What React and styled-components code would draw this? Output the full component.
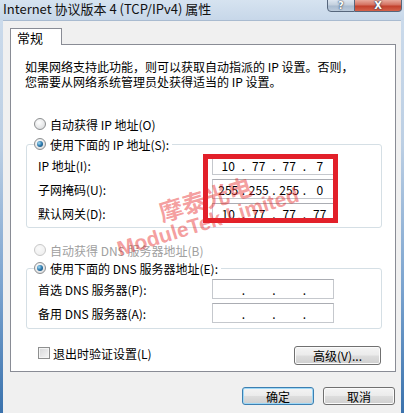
import React from 'react';
import styled, { createGlobalStyle } from 'styled-components';

const Global = createGlobalStyle`
  html, body { margin: 0; padding: 0; }
  body {
    font-family: "Noto Sans CJK SC", "Noto Sans", sans-serif;
    font-size: 12px;
    color: #000;
  }
  * { box-sizing: border-box; }
`;

const Window = styled.div`
  position: relative;
  width: 404px;
  height: 413px;
  display: flex;
  flex-direction: column;
  overflow: hidden;
  background: linear-gradient(180deg, #cddcec 0%, #bccfe4 35%, #7aa3cf 70%, #3a72ad 100%);
`;

const TitleBar = styled.div`
  height: 20px;
  flex: none;
  display: flex;
  justify-content: space-between;
  align-items: flex-start;
  background: linear-gradient(180deg, #d6e3f0, #c7d7e9);
`;

const Title = styled.div`
  padding-left: 3px;
  line-height: 17px;
  font-size: 13px;
  color: #111;
  white-space: nowrap;
`;

const Captions = styled.div`
  display: flex;
  margin-right: 2px;
  margin-top: -1px;
`;

const CaptionButton = styled.div`
  width: ${p => p.$w}px;
  height: 13px;
  display: flex;
  align-items: center;
  justify-content: center;
  border: 1px solid #56667c;
  border-left: ${p => (p.$close ? 'none' : '1px solid #56667c')};
  border-radius: ${p => (p.$close ? '0 0 4px 0' : '0 0 0 4px')};
  background: ${p =>
    p.$close
      ? 'linear-gradient(180deg, #e8a99c 0%, #d4705f 45%, #c2402c 55%, #d5624a 100%)'
      : 'linear-gradient(180deg, #dde6f0 0%, #c3d0de 45%, #a9bbcf 55%, #bccbdc 100%)'};
  color: #fff;
  font-family: "DejaVu Sans", sans-serif;
  font-weight: bold;
  font-size: 10px;
  line-height: 1;
  text-shadow: 0 0 2px #2a3a50, 0 0 1px #2a3a50;
`;

const Client = styled.div`
  flex: 1;
  margin: 0 3px;
  background: #f0f0f0;
  border-top: 1px solid #a9bbd0;
  padding: 7px 5px 0 7px;
  display: flex;
  flex-direction: column;
`;

const TabStrip = styled.div`
  display: flex;
  height: 16px;
`;

const Tab = styled.div`
  position: relative;
  z-index: 1;
  width: 52px;
  height: 17px;
  background: #fff;
  border: 1px solid #898c95;
  border-bottom: none;
  padding-left: 6px;
  font-size: 13px;
  line-height: 17px;
`;

const Panel = styled.div`
  background: #fff;
  border: 1px solid #898c95;
  padding: 14px 0 6px 0;
  display: flex;
  flex-direction: column;
`;

const Intro = styled.p`
  margin: 0 0 0 14px;
  line-height: 15px;
  font-size: 12px;
`;

const RadioRow = styled.div`
  display: flex;
  align-items: center;
  gap: 4px;
  height: 18px;
  margin-left: ${p => p.$ml ?? 23}px;
  margin-top: ${p => p.$mt ?? 0}px;
  color: ${p => (p.$disabled ? '#a0a0a0' : '#000')};
  white-space: nowrap;
`;

const RadioDot = styled.span`
  width: 12px;
  height: 12px;
  flex: none;
  border-radius: 50%;
  border: 1px solid ${p => (p.$disabled ? '#c8c8c8' : '#8c8e90')};
  background: ${p =>
    p.$disabled
      ? 'radial-gradient(circle at 40% 35%, #fafafa, #ececec)'
      : 'radial-gradient(circle at 40% 35%, #ffffff, #d4d6d8)'};
  display: flex;
  align-items: center;
  justify-content: center;
  &::after {
    content: '';
    display: ${p => (p.$checked ? 'block' : 'none')};
    width: 6px;
    height: 6px;
    border-radius: 50%;
    background: radial-gradient(circle at 35% 35%, #a6dcf5 0%, #2c79ad 50%, #123f63 100%);
  }
`;

const Group = styled.fieldset`
  margin: ${p => p.$mt ?? 0}px 13px 0 15px;
  padding: 0 0 ${p => p.$pb ?? 2}px 11px;
  border: 1px solid #d5dfe5;
  border-radius: 3px;
  min-width: 0;
`;

const Legend = styled.legend`
  margin-left: -4px;
  padding: 0 3px 0 0;
  height: 18px;
  background: #fff;
`;

const FieldRow = styled.div`
  display: grid;
  grid-template-columns: 174px 122px;
  align-items: center;
  height: 24px;
  white-space: nowrap;
`;

const IpBox = styled.div`
  height: 20px;
  border: 1px solid #c5c8cd;
  border-top-color: #abadb3;
  background: #fff;
  display: flex;
  align-items: center;
  padding-left: 2px;
  font-size: 12px;
`;

const Octet = styled.span`
  width: 27px;
  text-align: center;
`;

const Dot = styled.span`
  width: 4px;
  text-align: center;
`;

const BottomRow = styled.div`
  display: flex;
  justify-content: space-between;
  align-items: center;
  height: 20px;
  margin: 16px 14px 0 27px;
`;

const CheckLabel = styled.div`
  display: flex;
  align-items: center;
  gap: 3px;
  margin-top: -4px;
`;

const CheckBox = styled.span`
  width: 12px;
  height: 12px;
  border: 1px solid #8e8f8f;
  background: linear-gradient(135deg, #d6d7d8, #f6f6f6);
  box-shadow: inset 0 0 0 1px #f4f4f4;
`;

const Button = styled.div`
  width: ${p => p.$w}px;
  height: ${p => p.$h ?? 18}px;
  display: flex;
  align-items: center;
  justify-content: center;
  border: 1px solid ${p => (p.$default ? '#3c7fb1' : '#707070')};
  border-radius: 3px;
  background: linear-gradient(180deg, #f4f4f4 0%, #ebebeb 48%, #dddddd 52%, #cfcfcf 100%);
  box-shadow: inset 0 0 0 1px ${p => (p.$default ? '#9fd8f6' : '#fbfbfb')};
  font-size: 12px;
  white-space: nowrap;
`;

const Footer = styled.div`
  display: flex;
  justify-content: flex-end;
  gap: 9px;
  padding: 15px 1px 0 0;
`;

const RedFrame = styled.div`
  position: absolute;
  left: 203px;
  top: 154px;
  width: 135px;
  height: 69px;
  border: 5px solid #e2202a;
  z-index: 3;
  pointer-events: none;
`;

const Watermark = styled.div`
  position: absolute;
  left: ${p => p.$x}px;
  top: ${p => p.$y}px;
  transform: translate(-50%, -50%) rotate(-17deg);
  color: rgba(232, 40, 40, 0.45);
  font-family: ${p => p.$font};
  font-size: ${p => p.$size}px;
  font-weight: bold;
  white-space: nowrap;
  z-index: 4;
  pointer-events: none;
`;

const IpField = ({ parts }) => (
  <IpBox>
    {[0, 1, 2, 3].map(i => (
      <React.Fragment key={i}>
        <Octet>{parts ? parts[i] : ''}</Octet>
        {i < 3 && <Dot>.</Dot>}
      </React.Fragment>
    ))}
  </IpBox>
);

export default function App() {
  return (
    <Window>
      <Global />
      <TitleBar>
        <Title>Internet 协议版本 4 (TCP/IPv4) 属性</Title>
        <Captions>
          <CaptionButton $w={28}>?</CaptionButton>
          <CaptionButton $w={47} $close>X</CaptionButton>
        </Captions>
      </TitleBar>
      <Client>
        <TabStrip>
          <Tab>常规</Tab>
        </TabStrip>
        <Panel>
          <Intro>
            如果网络支持此功能，则可以获取自动指派的 IP 设置。否则，
            <br />
            您需要从网络系统管理员处获得适当的 IP 设置。
          </Intro>
          <RadioRow $mt={26}>
            <RadioDot />
            自动获得 IP 地址(O)
          </RadioRow>
          <Group $mt={2}>
            <Legend>
              <RadioRow $ml={0}>
                <RadioDot $checked />
                使用下面的 IP 地址(S):
              </RadioRow>
            </Legend>
            <FieldRow>
              <span>IP 地址(I):</span>
              <IpField parts={['10', '77', '77', '7']} />
            </FieldRow>
            <FieldRow>
              <span>子网掩码(U):</span>
              <IpField parts={['255', '255', '255', '0']} />
            </FieldRow>
            <FieldRow>
              <span>默认网关(D):</span>
              <IpField parts={['10', '77', '77', '77']} />
            </FieldRow>
          </Group>
          <RadioRow $mt={13} $disabled>
            <RadioDot $disabled />
            自动获得 DNS 服务器地址(B)
          </RadioRow>
          <Group $pb={3}>
            <Legend>
              <RadioRow $ml={0}>
                <RadioDot $checked />
                使用下面的 DNS 服务器地址(E):
              </RadioRow>
            </Legend>
            <FieldRow>
              <span>首选 DNS 服务器(P):</span>
              <IpField />
            </FieldRow>
            <FieldRow>
              <span>备用 DNS 服务器(A):</span>
              <IpField />
            </FieldRow>
          </Group>
          <BottomRow>
            <CheckLabel>
              <CheckBox />
              退出时验证设置(L)
            </CheckLabel>
            <Button $w={87} $h={19}>高级(V)...</Button>
          </BottomRow>
        </Panel>
        <Footer>
          <Button $w={72} $default>确定</Button>
          <Button $w={72}>取消</Button>
        </Footer>
      </Client>
      <RedFrame />
      <Watermark $x={205} $y={198} $size={24} $font={'"Noto Sans CJK SC", sans-serif'}>摩泰光电</Watermark>
      <Watermark $x={208} $y={222} $size={21} $font={'"Liberation Sans", Arial, sans-serif'}>ModuleTek Limited</Watermark>
    </Window>
  );
}
